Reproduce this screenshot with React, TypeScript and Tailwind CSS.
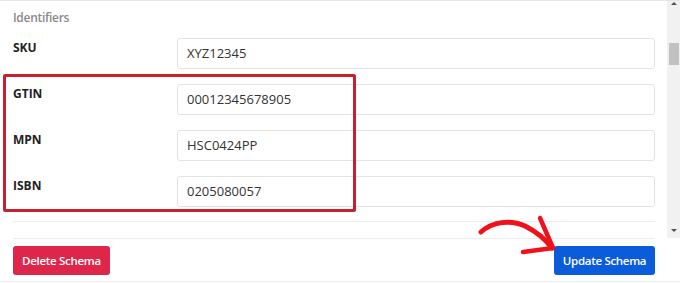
import React from "react";

const rows = [
  { label: "SKU", value: "XYZ12345" },
  { label: "GTIN", value: "00012345678905" },
  { label: "MPN", value: "HSC0424PP" },
  { label: "ISBN", value: "0205080057" },
];

export default function App() {
  return (
    <div
      className="relative w-[680px] h-[283px] overflow-hidden bg-white"
      style={{ fontFamily: '"Open Sans", "Noto Sans", sans-serif' }}
    >
      <div className="flex h-[238px] border-t border-[#e6e6e6]">
        <div className="flex-1 pl-[13px] pr-[12px]">
          <div className="pt-[8px] h-[37px] text-[12px] tracking-[-0.3px] font-semibold text-[#8a8a8a]">Identifiers</div>
          <div className="flex flex-col gap-[15px]">
            {rows.map((r) => (
              <div key={r.label} className="flex">
                <div className="w-[164px] pt-[1px] text-[12px] font-bold text-[#222]">{r.label}</div>
                <div className="flex-1 h-[31px] flex items-center pl-[9px] border border-[#e3e3e3] rounded-[3px] text-[13px] text-[#333]">
                  {r.value}
                </div>
              </div>
            ))}
          </div>
          <div className="mt-[14px] border-t border-[#ececec]" />
        </div>
        <div className="w-[13px] bg-[#f1f1f1] flex flex-col items-center pt-[1px] pb-[6px]">
          <div className="w-0 h-0 border-l-[3px] border-r-[3px] border-b-[3px] border-l-transparent border-r-transparent border-b-[#505050]" />
          <div className="w-[10px] h-[22px] bg-[#c1c1c1] mt-[38px]" />
          <div className="flex-1" />
          <div className="w-0 h-0 border-l-[3px] border-r-[3px] border-t-[3px] border-l-transparent border-r-transparent border-t-[#505050]" />
        </div>
      </div>
      <div className="flex items-center justify-between h-[43px] ml-[13px] mr-[25px] border-t border-[#ececec] pt-[1px]">
        <button className="h-[29px] w-[97px] rounded-[3px] bg-[#dd2649] text-white text-[11.5px] tracking-[-0.3px] font-semibold">
          Delete Schema
        </button>
        <button className="h-[29px] w-[101px] rounded-[3px] bg-[#0b5cdb] text-white text-[11.5px] tracking-[-0.3px] font-semibold">
          Update Schema
        </button>
      </div>
      <div className="border-t border-[#ececec]" />
      <div className="absolute left-[3px] top-[74px] w-[353px] h-[138px] border-[3px] border-[#c8202f] rounded-[2px]" />
      <svg className="absolute left-0 top-0" width="680" height="283" viewBox="0 0 680 283">
        <path
          d="M481 232 C 492 222, 510 219, 525 226 C 537 232, 546 240, 552 248"
          fill="none"
          stroke="#f0121a"
          strokeWidth="5"
          strokeLinecap="round"
        />
        <path d="M540 218 L 553 248" fill="none" stroke="#f0121a" strokeWidth="4.5" strokeLinecap="round" />
        <path d="M523 252 L 553 248" fill="none" stroke="#f0121a" strokeWidth="4.5" strokeLinecap="round" />
      </svg>
    </div>
  );
}
